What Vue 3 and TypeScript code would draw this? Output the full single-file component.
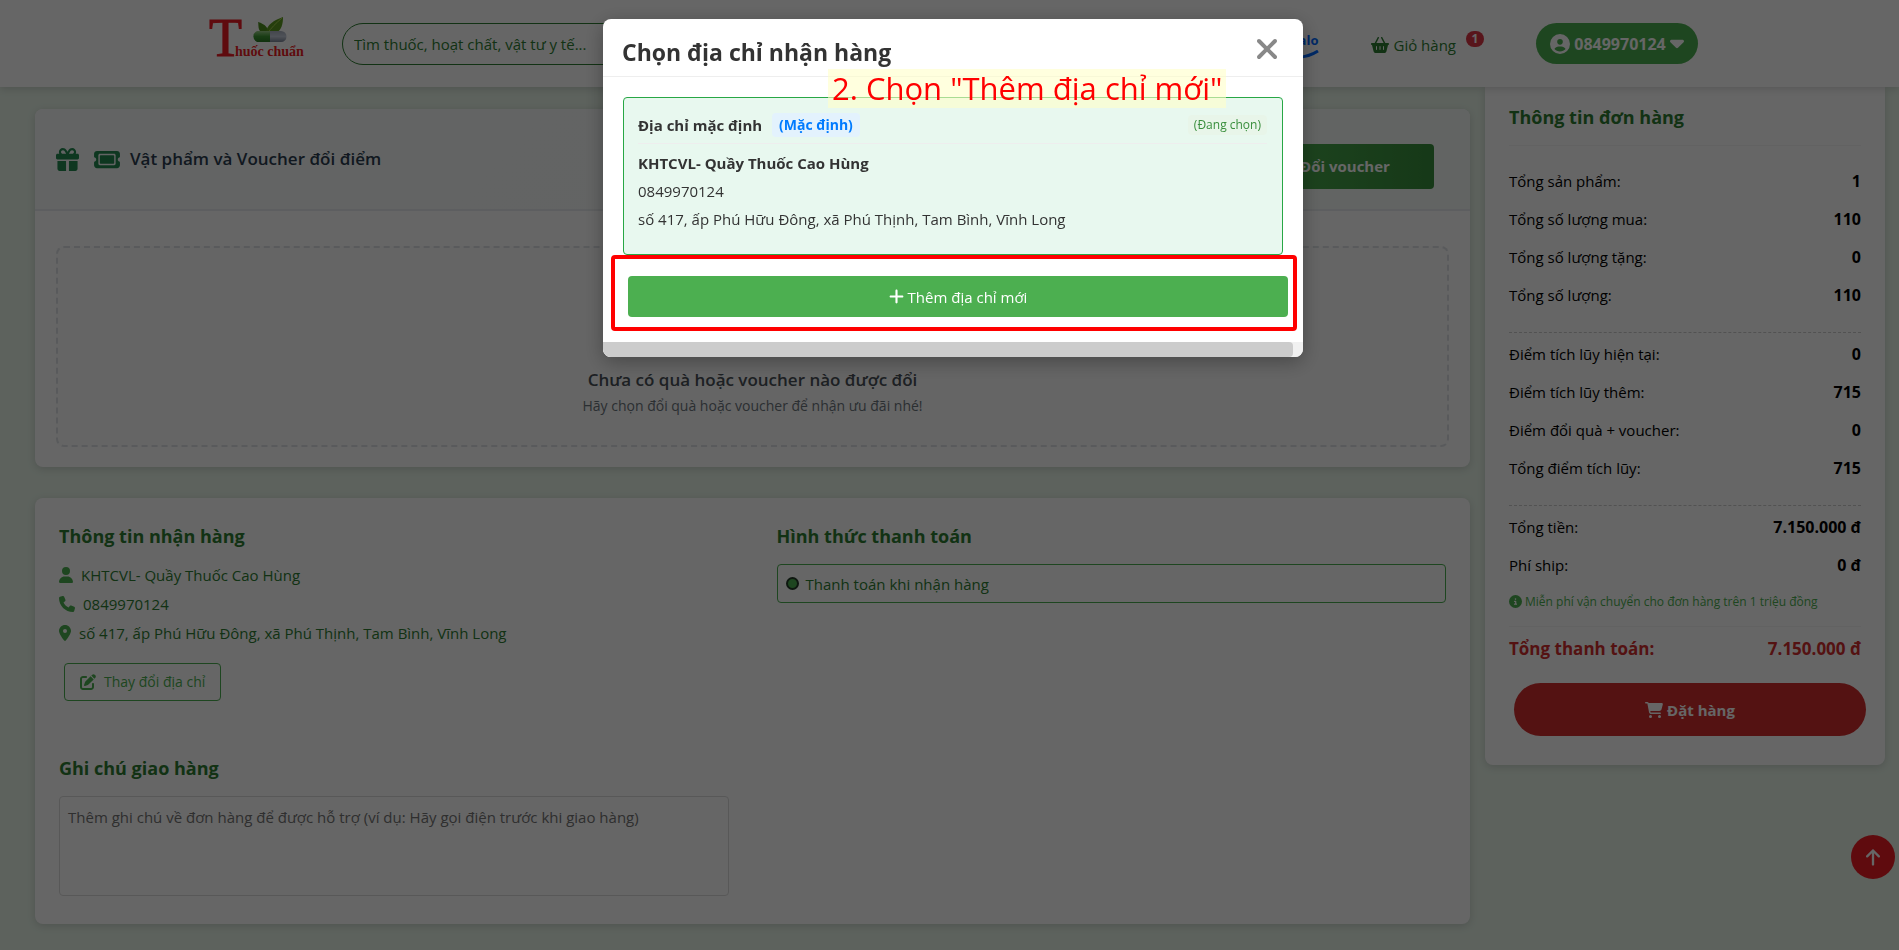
<script setup lang="ts">
import { ref } from 'vue'

interface Row {
  label: string
  value: string
}

interface Icon {
  w: number
  d: string
}

const icons: Record<string, Icon> = {
  user: { w: 448, d: 'M224 256A128 128 0 1 0 224 0a128 128 0 1 0 0 256zm-45.7 48C79.8 304 0 383.8 0 482.3C0 498.7 13.3 512 29.7 512H418.3c16.4 0 29.7-13.3 29.7-29.7C448 383.8 368.2 304 269.7 304H178.3z' },
  phone: { w: 512, d: 'M164.9 24.6c-7.7-18.6-28-28.5-47.4-23.2l-88 24C12.1 30.2 0 46 0 64C0 311.4 200.6 512 448 512c18 0 33.8-12.1 38.6-29.5l24-88c5.3-19.4-4.6-39.7-23.2-47.4l-96-40c-16.3-6.8-35.2-2.1-46.3 11.6L304.7 368C234.3 334.7 177.3 277.7 144 207.3L193.3 167c13.7-11.2 18.4-30 11.6-46.3l-40-96z' },
  pin: { w: 384, d: 'M215.7 499.2C267 435 384 279.4 384 192C384 86 298 0 192 0S0 86 0 192c0 87.4 117 243 168.3 307.2c12.3 15.3 35.1 15.3 47.4 0zM192 128a64 64 0 1 1 0 128 64 64 0 1 1 0-128z' },
  edit: { w: 512, d: 'M471.6 21.7c-21.9-21.9-57.3-21.9-79.2 0L362.3 51.7l97.9 97.9 30.1-30.1c21.9-21.9 21.9-57.3 0-79.2L471.6 21.7zm-299.2 220c-6.1 6.1-10.8 13.6-13.5 21.9l-29.6 88.8c-2.9 8.6-.6 18.1 5.8 24.6s15.9 8.7 24.6 5.8l88.8-29.6c8.2-2.7 15.7-7.4 21.9-13.5L437.7 172.3 339.7 74.3 172.4 241.7zM96 64C43 64 0 107 0 160V416c0 53 43 96 96 96H352c53 0 96-43 96-96V320c0-17.7-14.3-32-32-32s-32 14.3-32 32v96c0 17.7-14.3 32-32 32H96c-17.7 0-32-14.3-32-32V160c0-17.7 14.3-32 32-32h96c17.7 0 32-14.3 32-32s-14.3-32-32-32H96z' },
  cart: { w: 576, d: 'M0 24C0 10.7 10.7 0 24 0H69.5c22 0 41.5 12.8 50.6 32h411c26.3 0 45.5 25 38.6 50.4l-41 152.3c-8.5 31.4-37 53.3-69.5 53.3H170.7l5.4 28.5c2.2 11.3 12.1 19.5 23.6 19.5H488c13.3 0 24 10.7 24 24s-10.7 24-24 24H199.7c-34.6 0-64.3-24.6-70.7-58.5L77.4 54.5c-.7-3.8-4-6.5-7.9-6.5H24C10.7 48 0 37.3 0 24zM128 464a48 48 0 1 1 96 0 48 48 0 1 1 -96 0zm336-48a48 48 0 1 1 0 96 48 48 0 1 1 0-96z' },
  info: { w: 512, d: 'M256 512A256 256 0 1 0 256 0a256 256 0 1 0 0 512zM216 336h24V272H216c-13.3 0-24-10.7-24-24s10.7-24 24-24h48c13.3 0 24 10.7 24 24v88h8c13.3 0 24 10.7 24 24s-10.7 24-24 24H216c-13.3 0-24-10.7-24-24s10.7-24 24-24zm40-208a32 32 0 1 1 0 64 32 32 0 1 1 0-64z' },
  account: { w: 512, d: 'M399 384.2C376.9 345.8 335.4 320 288 320H224c-47.4 0-88.9 25.8-111 64.2c35.2 39.2 86.2 63.8 143 63.8s107.8-24.7 143-63.8zM0 256a256 256 0 1 1 512 0A256 256 0 1 1 0 256zm256 16a72 72 0 1 0 0-144 72 72 0 1 0 0 144z' },
  caret: { w: 320, d: 'M137.4 374.6c12.5 12.5 32.8 12.5 45.3 0l128-128c9.2-9.2 11.9-22.9 6.9-34.9s-16.6-19.8-29.6-19.8L32 192c-12.9 0-24.6 7.8-29.6 19.8s-2.2 25.7 6.9 34.9l128 128z' },
  plus: { w: 448, d: 'M256 80c0-17.7-14.3-32-32-32s-32 14.3-32 32V224H48c-17.7 0-32 14.3-32 32s14.3 32 32 32H192V432c0 17.7 14.3 32 32 32s32-14.3 32-32V288H400c17.7 0 32-14.3 32-32s-14.3-32-32-32H256V80z' },
  close: { w: 384, d: 'M342.6 150.6c12.5-12.5 12.5-32.8 0-45.3s-32.8-12.5-45.3 0L192 210.7 86.6 105.4c-12.5-12.5-32.8-12.5-45.3 0s-12.5 32.8 0 45.3L146.7 256 41.4 361.4c-12.5 12.5-12.5 32.8 0 45.3s32.8 12.5 45.3 0L192 301.3 297.4 406.6c12.5 12.5 32.8 12.5 45.3 0s12.5-32.8 0-45.3L237.3 256 342.6 150.6z' },
  up: { w: 384, d: 'M214.6 41.4c-12.5-12.5-32.8-12.5-45.3 0l-160 160c-12.5 12.5-12.5 32.8 0 45.3s32.8 12.5 45.3 0L160 141.2V448c0 17.7 14.3 32 32 32s32-14.3 32-32V141.2L329.4 246.6c12.5 12.5 32.8 12.5 45.3 0s12.5-32.8 0-45.3l-160-160z' },
  gift: { w: 512, d: 'M190.5 68.8L225.3 128H224 152c-22.1 0-40-17.9-40-40s17.9-40 40-40h2.2c14.9 0 28.8 7.9 36.3 20.8zM64 88c0 14.4 3.5 28 9.6 40H32c-17.7 0-32 14.3-32 32v64c0 17.7 14.3 32 32 32H480c17.7 0 32-14.3 32-32V160c0-17.7-14.3-32-32-32H438.4c6.1-12 9.6-25.6 9.6-40c0-48.6-39.4-88-88-88h-2.2c-31.9 0-61.5 16.9-77.7 44.4L256 85.5l-24.1-41C215.7 16.9 186.1 0 154.2 0H152C103.4 0 64 39.4 64 88zm336 0c0 22.1-17.9 40-40 40H288h-1.3l34.8-59.2C329.1 55.9 342.9 48 357.8 48H360c22.1 0 40 17.9 40 40zM32 288V464c0 26.5 21.5 48 48 48H224V288H32zM288 512H432c26.5 0 48-21.5 48-48V288H288V512z' },
  ticket: { w: 576, d: 'M64 64C28.7 64 0 92.7 0 128v64c0 8.8 7.4 15.7 15.7 18.6C34.5 217.1 48 235 48 256s-13.5 38.9-32.3 45.4C7.4 304.3 0 311.2 0 320v64c0 35.3 28.7 64 64 64H512c35.3 0 64-28.7 64-64V320c0-8.8-7.4-15.7-15.7-18.6C541.5 294.9 528 277 528 256s13.5-38.9 32.3-45.4c8.3-2.9 15.7-9.8 15.7-18.6V128c0-35.3-28.7-64-64-64H64zm64 112l0 160c0 8.8 7.2 16 16 16H432c8.8 0 16-7.2 16-16V176c0-8.8-7.2-16-16-16H144c-8.8 0-16 7.2-16 16zM96 160c0-17.7 14.3-32 32-32H448c17.7 0 32 14.3 32 32V352c0 17.7-14.3 32-32 32H128c-17.7 0-32-14.3-32-32V160z' },
  basket: { w: 576, d: 'M253.3 35.1c6.1-11.8 1.5-26.3-10.2-32.4s-26.3-1.5-32.4 10.2L117.6 192H32c-17.7 0-32 14.3-32 32s14.3 32 32 32L83.9 463.5C91 492 116.6 512 146 512H430c29.4 0 55-20 62.1-48.5L544 256c17.7 0 32-14.3 32-32s-14.3-32-32-32H458.4L365.3 12.9C359.2 1.2 344.7-3.4 332.9 2.7s-16.3 20.6-10.2 32.4L404.3 192H171.7L253.3 35.1zM192 304v96c0 8.8-7.2 16-16 16s-16-7.2-16-16V304c0-8.8 7.2-16 16-16s16 7.2 16 16zm96-16c8.8 0 16 7.2 16 16v96c0 8.8-7.2 16-16 16s-16-7.2-16-16V304c0-8.8 7.2-16 16-16zm128 16v96c0 8.8-7.2 16-16 16s-16-7.2-16-16V304c0-8.8 7.2-16 16-16s16 7.2 16 16z' },
}

const box = (name: string) => `0 0 ${icons[name].w} 512`

const contact: { icon: string; text: string }[] = [
  { icon: 'user', text: 'KHTCVL- Quầy Thuốc Cao Hùng' },
  { icon: 'phone', text: '0849970124' },
  { icon: 'pin', text: 'số 417, ấp Phú Hữu Đông, xã Phú Thịnh, Tam Bình, Vĩnh Long' },
]

const quantities: Row[] = [
  { label: 'Tổng sản phẩm:', value: '1' },
  { label: 'Tổng số lượng mua:', value: '110' },
  { label: 'Tổng số lượng tặng:', value: '0' },
  { label: 'Tổng số lượng:', value: '110' },
]

const points: Row[] = [
  { label: 'Điểm tích lũy hiện tại:', value: '0' },
  { label: 'Điểm tích lũy thêm:', value: '715' },
  { label: 'Điểm đổi quà + voucher:', value: '0' },
  { label: 'Tổng điểm tích lũy:', value: '715' },
]

const money: Row[] = [
  { label: 'Tổng tiền:', value: '7.150.000 đ' },
  { label: 'Phí ship:', value: '0 đ' },
]

const query = ref('')
const note = ref('')
const payment = ref('cod')
const open = ref(true)
</script>

<template>
  <div class="page">
    <header class="topbar">
      <a class="logo" href="#" aria-label="Thuốc chuẩn">
        <svg viewBox="0 0 96 44" width="96" height="44">
          <defs>
            <linearGradient id="pillGreen" x1="0" y1="0" x2="0" y2="1">
              <stop offset="0" stop-color="#9ccf8a" />
              <stop offset="0.5" stop-color="#3f9a35" />
              <stop offset="1" stop-color="#2c7a26" />
            </linearGradient>
            <linearGradient id="pillWhite" x1="0" y1="0" x2="0" y2="1">
              <stop offset="0" stop-color="#aab2c2" />
              <stop offset="0.5" stop-color="#c6cddb" />
              <stop offset="1" stop-color="#7f889b" />
            </linearGradient>
          </defs>
          <path d="M54 15C48 11 50 6 49 3C56 5 60 9 59 15Z" fill="#4f8f1f" />
          <path d="M57 15C57 5 66 1 74 -2C74 6 72 15 61 15Z" fill="#5d9c22" />
          <path d="M58 15C62 9 67 4 73 -1" fill="none" stroke="#a5cf4c" stroke-width="1" />
          <path d="M61 12H48A6 6 0 0 0 48 23H61Z" fill="url(#pillGreen)" />
          <path d="M61 12H72A5 5 0 0 1 72 23H61Z" fill="url(#pillWhite)" />
          <text x="0" y="37" class="logo-t">T</text>
          <text x="26" y="37" class="logo-s">huốc chuẩn</text>
        </svg>
      </a>
      <input v-model="query" class="search" type="search" placeholder="Tìm thuốc, hoạt chất, vật tư y tế..." aria-label="Tìm kiếm" />
      <a class="zalo" href="#">Zalo
        <svg viewBox="0 0 40 10" width="40" height="10"><path d="M2 1Q20 13 39 1" fill="none" stroke="#0068ff" stroke-width="3" /></svg>
      </a>
      <a class="basket" href="#">
        <svg class="ico" :viewBox="box('basket')" width="18" height="16"><path :d="icons.basket.d" /></svg>
        Giỏ hàng
        <span class="count">1</span>
      </a>
      <button class="account" type="button">
        <svg class="ico" :viewBox="box('account')" width="20" height="20"><path :d="icons.account.d" /></svg>
        0849970124
        <svg class="ico" viewBox="0 160 320 256" width="14" height="12"><path :d="icons.caret.d" /></svg>
      </button>
    </header>

    <main class="layout">
      <div class="left">
        <section class="card">
          <div class="gift-head">
            <svg class="ico" :viewBox="box('gift')" width="23" height="23"><path :d="icons.gift.d" /></svg>
            <svg class="ico" :viewBox="box('ticket')" width="26" height="23"><path :d="icons.ticket.d" /></svg>
            <h2>Vật phẩm và Voucher đổi điểm</h2>
            <button class="voucher" type="button">Đổi voucher</button>
          </div>
          <div class="gift-body">
            <div class="empty">
              <strong>Chưa có quà hoặc voucher nào được đổi</strong>
              <span>Hãy chọn đổi quà hoặc voucher để nhận ưu đãi nhé!</span>
            </div>
          </div>
        </section>

        <section class="card details">
          <div class="receiver">
            <h3>Thông tin nhận hàng</h3>
            <p v-for="c in contact" :key="c.icon">
              <svg class="ico" :viewBox="box(c.icon)" :width="icons[c.icon].w / 32" height="16"><path :d="icons[c.icon].d" /></svg>
              {{ c.text }}
            </p>
            <button class="change" type="button" @click="open = true">
              <svg class="ico" :viewBox="box('edit')" width="16" height="16"><path :d="icons.edit.d" /></svg>
              Thay đổi địa chỉ
            </button>
          </div>
          <div class="payment">
            <h3>Hình thức thanh toán</h3>
            <label class="option">
              <input v-model="payment" type="radio" name="payment" value="cod" />
              Thanh toán khi nhận hàng
            </label>
          </div>
          <div class="note">
            <h3><label for="note">Ghi chú giao hàng</label></h3>
            <textarea id="note" v-model="note" placeholder="Thêm ghi chú về đơn hàng để được hỗ trợ (ví dụ: Hãy gọi điện trước khi giao hàng)"></textarea>
          </div>
        </section>
      </div>

      <aside class="summary">
        <h3>Thông tin đơn hàng</h3>
        <dl class="first">
          <div v-for="r in quantities" :key="r.label"><dt>{{ r.label }}</dt><dd>{{ r.value }}</dd></div>
        </dl>
        <dl>
          <div v-for="r in points" :key="r.label"><dt>{{ r.label }}</dt><dd>{{ r.value }}</dd></div>
        </dl>
        <dl class="last">
          <div v-for="r in money" :key="r.label"><dt>{{ r.label }}</dt><dd>{{ r.value }}</dd></div>
        </dl>
        <p class="free">
          <svg class="ico" :viewBox="box('info')" width="13" height="13"><path :d="icons.info.d" /></svg>
          Miễn phí vận chuyển cho đơn hàng trên 1 triệu đồng
        </p>
        <p class="total"><span>Tổng thanh toán:</span><span>7.150.000 đ</span></p>
        <button class="order" type="button">
          <svg class="ico" :viewBox="box('cart')" width="18" height="16"><path :d="icons.cart.d" /></svg>
          Đặt hàng
        </button>
      </aside>
    </main>

    <button class="to-top" type="button" aria-label="Lên đầu trang">
      <svg class="ico" :viewBox="box('up')" width="14" height="19"><path :d="icons.up.d" /></svg>
    </button>

    <div v-if="open" class="overlay">
      <div class="modal" role="dialog" aria-labelledby="modal-title">
        <div class="modal-head">
          <h2 id="modal-title">Chọn địa chỉ nhận hàng</h2>
          <button class="close" type="button" aria-label="Đóng" @click="open = false">
            <svg class="ico" viewBox="32 96 320 320" width="20" height="20"><path :d="icons.close.d" /></svg>
          </button>
        </div>
        <div class="modal-body">
          <article class="address">
            <div class="address-head">
              <strong>Địa chỉ mặc định</strong>
              <span class="default">(Mặc định)</span>
              <span class="chosen">(Đang chọn)</span>
            </div>
            <p><b>KHTCVL- Quầy Thuốc Cao Hùng</b></p>
            <p>0849970124</p>
            <p>số 417, ấp Phú Hữu Đông, xã Phú Thịnh, Tam Bình, Vĩnh Long</p>
          </article>
          <button class="add" type="button">
            <svg class="ico" :viewBox="box('plus')" width="15" height="17"><path :d="icons.plus.d" /></svg>
            Thêm địa chỉ mới
          </button>
        </div>
        <div class="scrollbar"><div class="thumb"></div></div>
        <div class="frame"></div>
        <div class="step">2. Chọn "Thêm địa chỉ mới"</div>
      </div>
    </div>
  </div>
</template>

<style>
body {
  background: #e8f5e9;
}
</style>

<style scoped>
* {
  box-sizing: border-box;
}
.page {
  min-height: 100vh;
  color: #000;
  font: 15px/24px "Open Sans", "Noto Sans", sans-serif;
}
button,
input,
textarea {
  font: inherit;
}
h2,
h3,
p,
dl,
dd {
  margin: 0;
}
.ico {
  flex: none;
  fill: currentColor;
}
.topbar {
  position: relative;
  display: flex;
  align-items: center;
  height: 87px;
  padding: 0 201px 0 209px;
  background: #fff;
  box-shadow: 0 2px 8px rgba(0, 0, 0, 0.15);
}
.logo {
  margin: 0 37px 6px 0;
  line-height: 0;
}
.logo svg {
  overflow: visible;
}
.logo-t {
  font: 54px "Liberation Serif", serif;
  fill: #ee1c25;
  stroke: #ee1c25;
  stroke-width: 1px;
}
.logo-s {
  font: bold 14px "Liberation Serif", serif;
  fill: #ee1c25;
}
.search {
  width: 700px;
  height: 42px;
  padding: 0 11px;
  border: 1px solid #2e7d32;
  border-radius: 21px;
  outline: 0;
  background: #fff;
}
.search::placeholder {
  color: #2e7d32;
  opacity: 1;
}
.zalo {
  display: flex;
  flex-direction: column;
  align-items: flex-end;
  gap: 2px;
  width: 60px;
  margin: 4px 52px 0 auto;
  color: #0068ff;
  font-weight: 700;
  font-size: 13px;
  line-height: 16px;
  text-decoration: none;
}
.basket {
  display: flex;
  align-items: center;
  gap: 5px;
  margin: 2px 52px 0 0;
  color: #2e7d32;
  text-decoration: none;
}
.count {
  align-self: flex-start;
  width: 18px;
  height: 16px;
  margin: -2px 0 0 5px;
  border-radius: 8px;
  background: #dc3545;
  color: #fff;
  font-size: 12px;
  font-weight: 700;
  line-height: 16px;
  text-align: center;
}
.account {
  display: flex;
  align-items: center;
  justify-content: center;
  gap: 4px;
  width: 162px;
  height: 41px;
  padding: 0;
  border: 0;
  border-radius: 21px;
  background: #4caf50;
  color: #fff;
  font-size: 16px;
  font-weight: 700;
}
.layout {
  display: flex;
  align-items: flex-start;
  gap: 15px;
  padding: 0 14px 26px 35px;
}
.left {
  flex: 1;
  min-width: 0;
  padding-top: 22px;
}
.card {
  overflow: hidden;
  border-radius: 8px;
  background: #fff;
  box-shadow: 0 2px 8px rgba(0, 0, 0, 0.15);
}
.gift-head {
  display: flex;
  align-items: center;
  gap: 10px;
  height: 102px;
  padding: 0 36px 0 21px;
  border-bottom: 2px solid #e9ecef;
  background: linear-gradient(135deg, #f8f9fa, #f5faf7);
  color: #248a52;
}
.gift-head .ico:first-child {
  margin-right: 5px;
}
.gift-head h2 {
  flex: 1;
  color: #2c3e50;
  font-size: 17px;
  font-weight: 600;
}
.voucher {
  width: 178px;
  height: 45px;
  margin-top: 14px;
  border: 0;
  border-radius: 4px;
  background: linear-gradient(90deg, #4caf50, #388e3c);
  color: #fff;
  font-weight: 700;
}
.gift-body {
  padding: 35px 21px 20px;
}
.empty {
  display: flex;
  flex-direction: column;
  align-items: center;
  justify-content: flex-end;
  height: 201px;
  padding-bottom: 27px;
  border: 2px dashed #dee2e6;
  border-radius: 8px;
  background: #fcfcfc;
  color: #6c757d;
  font-size: 14px;
}
.empty strong {
  color: #495057;
  font-size: 17px;
  font-weight: 600;
  line-height: 28px;
}
.details {
  display: grid;
  grid-template-columns: 1fr 1fr;
  column-gap: 48px;
  margin-top: 31px;
  padding: 24px 24px 28px;
}
.details h3,
.summary h3 {
  color: #2e7d32;
  font-size: 18px;
  font-weight: 700;
  line-height: 28px;
}
.details h3 {
  margin-bottom: 14px;
}
.receiver h3 {
  margin-bottom: 13px;
}
.receiver p {
  display: flex;
  align-items: center;
  gap: 8px;
  height: 24px;
  margin-bottom: 5px;
  color: #2e7d32;
}
.receiver .ico {
  fill: #4caf50;
}
.change {
  display: flex;
  align-items: center;
  gap: 8px;
  height: 38px;
  margin: 18px 0 53px 5px;
  padding: 0 15px;
  border: 1px solid #4caf50;
  border-radius: 4px;
  background: #fff;
  color: #4caf50;
  font-size: 14px;
}
.option {
  display: flex;
  align-items: center;
  gap: 7px;
  height: 39px;
  padding: 0 8px;
  border: 1px solid #4caf50;
  border-radius: 4px;
  color: #2e7d32;
}
.option input {
  appearance: none;
  width: 13px;
  height: 13px;
  margin: 0;
  border: 2px solid #243a28;
  border-radius: 50%;
  background: #4caf50;
}
textarea {
  display: block;
  width: 100%;
  height: 100px;
  padding: 8px;
  border: 1px solid #ddd;
  border-radius: 4px;
  outline: 0;
  resize: none;
}
textarea::placeholder {
  color: #757575;
}
.summary {
  flex: none;
  width: 400px;
  padding: 16px 24px 29px;
  border-radius: 0 0 8px 8px;
  background: #fff;
  box-shadow: 0 2px 8px rgba(0, 0, 0, 0.15);
}
.summary h3 {
  padding-bottom: 14px;
  border-bottom: 1px solid #f4f4f4;
}
.summary dl {
  padding: 2px 0 18px;
  border-bottom: 1px dashed #ccc;
}
.summary .first {
  padding-top: 16px;
}
.summary .last {
  padding: 2px 0;
  border: 0;
}
dl div {
  display: flex;
  justify-content: space-between;
  line-height: 38px;
}
dd {
  font-size: 16px;
  font-weight: 700;
}
.free {
  display: flex;
  align-items: center;
  gap: 3px;
  height: 41px;
  padding-bottom: 9px;
  border-bottom: 1px solid #f4f4f4;
  color: #4caf50;
  font-size: 12px;
}
.total {
  display: flex;
  justify-content: space-between;
  padding: 7px 0 19px;
  color: #d32f2f;
  font-size: 17px;
  font-weight: 700;
  line-height: 30px;
}
.order {
  display: flex;
  align-items: center;
  justify-content: center;
  gap: 4px;
  width: 100%;
  height: 53px;
  margin-left: 5px;
  border: 0;
  border-radius: 27px;
  background: #d32f2f;
  color: #fff;
  font-weight: 700;
}
.to-top {
  position: fixed;
  right: 4px;
  bottom: 71px;
  display: flex;
  align-items: center;
  justify-content: center;
  width: 44px;
  height: 44px;
  padding: 0;
  border: 0;
  border-radius: 50%;
  background: #ed1c24;
  color: #fff;
}
.overlay {
  position: fixed;
  inset: 0;
  padding: 19px 0 0 7px;
  background: rgba(0, 0, 0, 0.6);
}
.modal {
  position: relative;
  width: 700px;
  max-width: 90%;
  margin: 0 auto;
  border-radius: 8px;
  background: #fff;
  color: #333;
  box-shadow: 0 5px 20px rgba(0, 0, 0, 0.3);
}
.modal-head {
  display: flex;
  align-items: center;
  justify-content: space-between;
  height: 58px;
  padding: 8px 26px 0 19px;
  border-bottom: 1px solid #eee;
}
.modal-head h2 {
  font-size: 23px;
  font-weight: 700;
}
.close {
  display: flex;
  padding: 0 0 6px;
  border: 0;
  background: none;
  color: #888;
}
.modal-body {
  padding: 20px 20px 25px;
}
.address {
  height: 158px;
  margin-bottom: 21px;
  padding: 12px 15px 0 14px;
  border: 1px solid #28a745;
  border-radius: 4px;
  background: #e8f8ef;
}
.address-head {
  display: flex;
  align-items: center;
  height: 34px;
  margin-bottom: 5px;
  padding-bottom: 3px;
  border-bottom: 1px solid #eee;
}
.default {
  margin-left: 10px;
  padding: 0 7px;
  border-radius: 4px;
  background: #e3f2fd;
  color: #007bff;
  font-size: 14px;
  font-weight: 700;
}
.chosen {
  margin-left: auto;
  padding: 0 6px;
  border-radius: 4px;
  background: #e8f5e9;
  color: #388e3c;
  font-size: 12px;
  line-height: 20px;
}
.address p {
  height: 28px;
  line-height: 28px;
}
.add {
  display: flex;
  align-items: center;
  justify-content: center;
  gap: 4px;
  width: 100%;
  height: 41px;
  margin-left: 5px;
  border: 0;
  border-radius: 4px;
  background: #4caf50;
  color: #fff;
}
.scrollbar {
  height: 15px;
  border-radius: 0 0 8px 8px;
  background: #f1f1f1;
  overflow: hidden;
}
.thumb {
  width: calc(100% - 10px);
  height: 100%;
  border-radius: 0 4px 4px 0;
  background: #ccc;
}
.frame {
  position: absolute;
  inset: 236px 6px 26px 8px;
  border: 4px solid #f00;
  border-radius: 4px;
}
.step {
  position: absolute;
  top: 50px;
  left: 225px;
  padding: 0 4px;
  background: rgba(255, 255, 200, 0.6);
  color: #f00;
  font: 31px/39px "Open Sans", "Noto Sans", sans-serif;
  white-space: nowrap;
}
</style>
